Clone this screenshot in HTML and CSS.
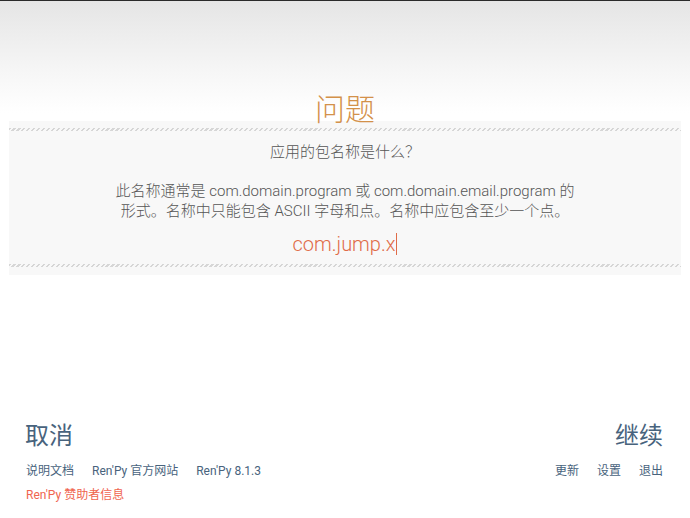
FILE: index.html
```html
<!DOCTYPE html>
<html lang="zh">
<head>
<meta charset="utf-8">
<link rel="stylesheet" href="styles.css">
</head>
<body>
<div class="screen">
  <div class="header">
    <h1 class="title">问题</h1>
  </div>
  <div class="panel">
    <div class="hatch"></div>
    <div class="content">
      <p class="question">应用的包名称是什么？</p>
      <p class="desc">此名称通常是 com.domain.program 或 com.domain.email.program 的<br>形式。名称中只能包含 ASCII 字母和点。名称中应包含至少一个点。</p>
      <p class="input">com.jump.x<span class="caret"></span></p>
    </div>
    <div class="hatch"></div>
  </div>
  <div class="footer">
    <div class="actions">
      <span class="action">取消</span>
      <span class="action">继续</span>
    </div>
    <div class="links">
      <div class="group">
        <span class="link">说明文档</span>
        <span class="link">Ren'Py 官方网站</span>
        <span class="link">Ren'Py 8.1.3</span>
      </div>
      <div class="group">
        <span class="link">更新</span>
        <span class="link">设置</span>
        <span class="link">退出</span>
      </div>
    </div>
    <div class="sponsor">Ren'Py 赞助者信息</div>
  </div>
</div>
</body>
</html>
```
FILE: styles.css
```css
* { box-sizing: border-box; }
html, body { margin: 0; padding: 0; }
body {
  width: 690px;
  height: 518px;
  overflow: hidden;
  font-family: Roboto, "Noto Sans CJK SC", sans-serif;
  background: #ffffff;
}
.screen {
  height: 518px;
  display: flex;
  flex-direction: column;
  border-top: 1px solid #2a2a2a;
  background: linear-gradient(to bottom, #e5e5e5 0px, #f6f6f6 70px, #ffffff 112px, #ffffff 100%);
}
.header {
  height: 120px;
  display: flex;
  align-items: flex-end;
  justify-content: center;
  position: relative;
  z-index: 1;
}
.title {
  margin: 0 0 -4px 0;
  font-size: 30px;
  line-height: 30px;
  font-weight: 300;
  color: #d3914a;
}
.panel {
  margin: 0 9px;
  background: #f8f8f8;
  padding: 7px 0 8px;
}
.hatch {
  height: 3px;
  background: repeating-linear-gradient(135deg, #d6d6d6 0px, #d6d6d6 1.5px, transparent 1.5px, transparent 3.5px);
}
.content {
  text-align: center;
  color: #555555;
  font-size: 15px;
  font-weight: 300;
  padding: 11px 0 7px;
}
.content p { margin: 0; }
.question { line-height: 20px; }
.desc {
  margin-top: 19px !important;
  line-height: 20px;
}
.input {
  margin-top: 10px !important;
  font-size: 20px;
  line-height: 26px;
  color: #e06c48;
}
.caret {
  display: inline-block;
  width: 1px;
  height: 22px;
  background: #e06c48;
  vertical-align: -4px;
  margin-left: 1px;
}
.footer {
  margin-top: auto;
  padding: 0 27px 15px 25px;
  color: #48637d;
}
.actions {
  display: flex;
  justify-content: space-between;
  font-size: 24px;
  line-height: 30px;
  font-weight: 400;
}
.links {
  display: flex;
  justify-content: space-between;
  margin-top: 12px;
  padding-left: 1px;
  font-size: 12px;
  line-height: 16px;
}
.group { display: flex; gap: 18px; }
.sponsor {
  margin-top: 8px;
  padding-left: 1px;
  font-size: 12px;
  line-height: 16px;
  color: #f0644f;
}
```
